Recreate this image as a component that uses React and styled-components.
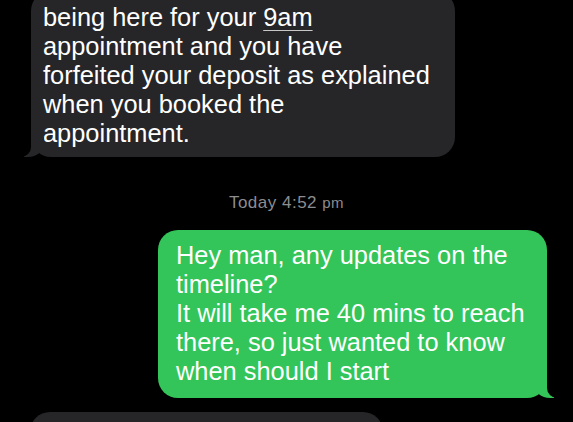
import styled, { createGlobalStyle } from 'styled-components'

const GlobalStyle = createGlobalStyle`
  html, body {
    margin: 0;
    padding: 0;
    background: #000;
    overflow: hidden;
  }
  body {
    font-family: "Liberation Sans", Arial, sans-serif;
    -webkit-font-smoothing: antialiased;
  }
`

const Thread = styled.div`
  display: flex;
  flex-direction: column;
  width: 573px;
  height: 422px;
  overflow: hidden;
`

const Scroller = styled.div`
  display: flex;
  flex-direction: column;
  margin-top: -9px;
`

const colors = {
  them: '#262628',
  me: '#33c559',
}

const Bubble = styled.div`
  position: relative;
  box-sizing: border-box;
  width: ${p => p.$width}px;
  align-self: ${p => (p.$me ? 'flex-end' : 'flex-start')};
  margin: ${p => (p.$me ? '0 26px 0 0' : `0 0 0 ${p.$left || 31}px`)};
  padding: ${p => p.$pad || '11px 14px 12px 13px'};
  background: ${p => (p.$me ? colors.me : colors.them)};
  color: #fff;
  border-radius: 20px;
  font-size: 25.4px;
  line-height: 29px;
  white-space: nowrap;

  ${p => p.$tail && `
    &::before {
      content: "";
      position: absolute;
      bottom: 0;
      ${p.$me ? 'right: -7px;' : 'left: -7px;'}
      width: 20px;
      height: 20px;
      background: ${p.$me ? colors.me : colors.them};
      ${p.$me ? 'border-bottom-left-radius: 16px 14px;' : 'border-bottom-right-radius: 16px 14px;'}
    }
    &::after {
      content: "";
      position: absolute;
      bottom: 0;
      ${p.$me ? 'right: -26px;' : 'left: -26px;'}
      width: 26px;
      height: 20px;
      background: #000;
      ${p.$me ? 'border-bottom-left-radius: 10px;' : 'border-bottom-right-radius: 10px;'}
    }
  `}
`

const Link = styled.span`
  text-decoration: underline;
  text-decoration-color: rgba(255, 255, 255, 0.75);
  text-decoration-thickness: 1px;
  text-underline-offset: 4px;
`

const Stamp = styled.div`
  margin: 36px 0 17px;
  text-align: center;
  color: #8d8d91;
  font-size: 17px;
  line-height: 20px;
  letter-spacing: 0.5px;

  small {
    font-size: 15px;
  }
`

const Spacer = styled.div`
  height: ${p => p.$h}px;
  flex: none;
`

export default function App() {
  return (
    <>
      <GlobalStyle />
      <Thread>
        <Scroller>
          <Bubble $width={424} $tail $pad="12px 14px 9px 12px">
            being here for your <Link>9am</Link>
            <br />
            appointment and you have
            <br />
            forfeited your deposit as explained
            <br />
            when you booked the
            <br />
            appointment.
          </Bubble>
          <Stamp>
            Today 4:52 <small>pm</small>
          </Stamp>
          <Bubble $me $width={389} $tail $pad="11px 14px 12px 18px">
            Hey man, any updates on the
            <br />
            timeline?
            <br />
            It will take me 40 mins to reach
            <br />
            there, so just wanted to know
            <br />
            when should I start
          </Bubble>
          <Spacer $h={14} />
          <Bubble $width={353} $left={30}>
            &nbsp;
            <br />
            &nbsp;
          </Bubble>
        </Scroller>
      </Thread>
    </>
  )
}
